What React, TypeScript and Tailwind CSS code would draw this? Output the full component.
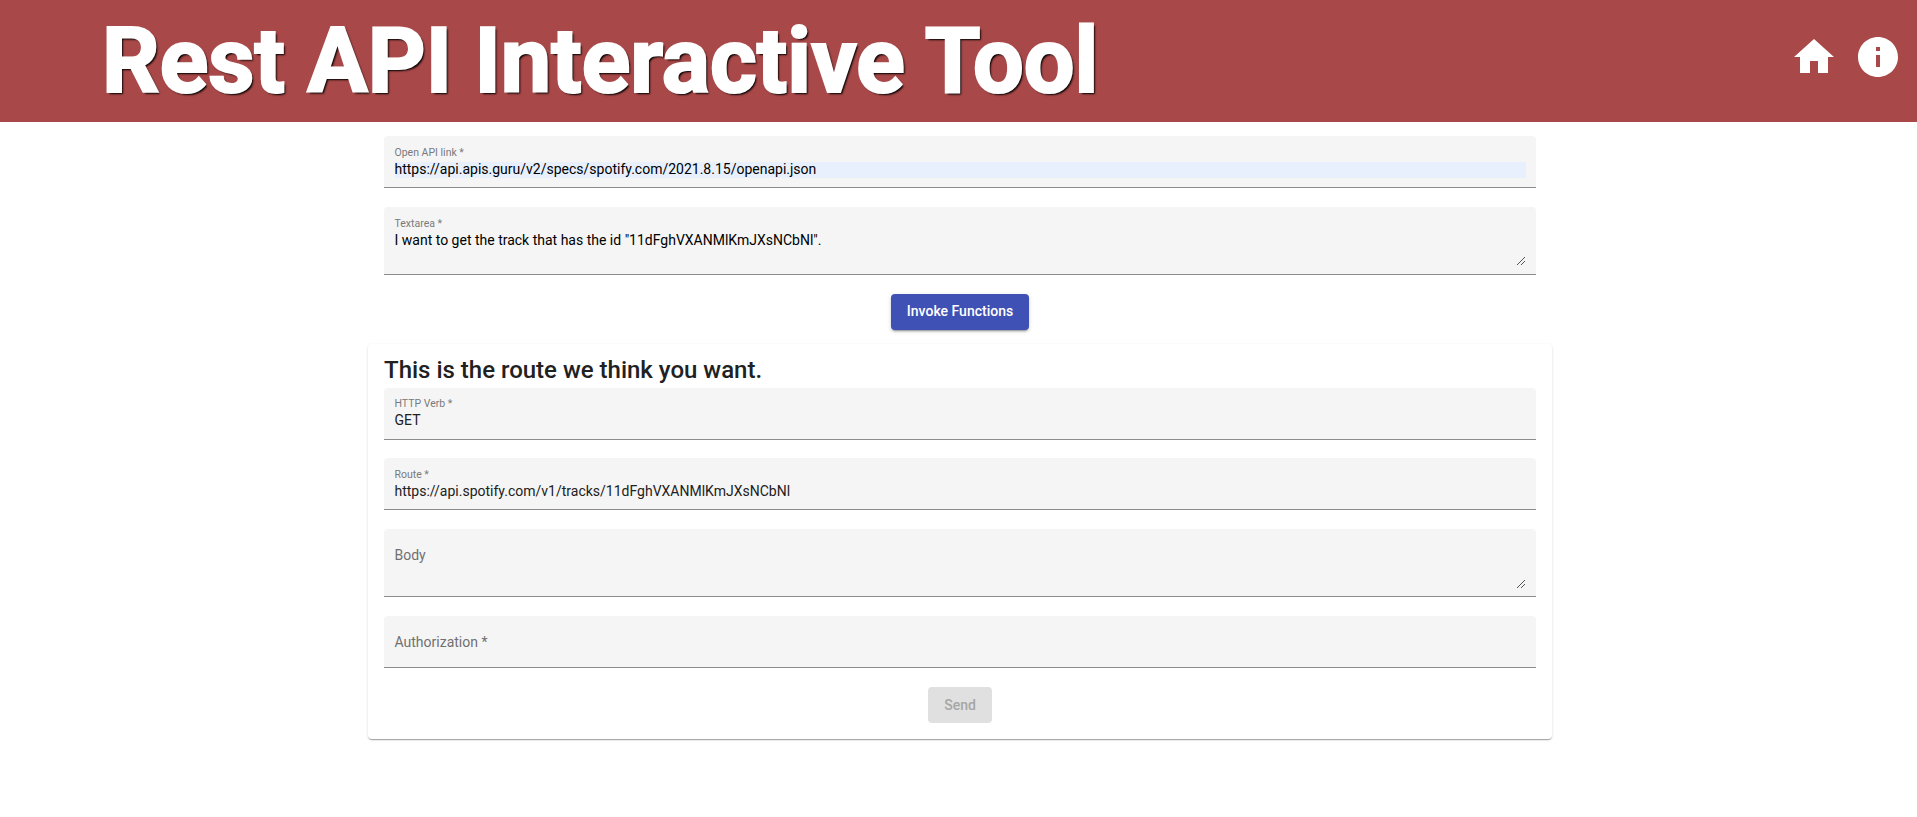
import { MdHome, MdInfo } from "react-icons/md";

type FieldProps = {
  label: string;
  value?: string;
  className: string;
  labelClass?: string;
  valueClass?: string;
  handleClass?: string;
};

function ResizeHandle({ className }: { className: string }) {
  const cells = [
    [0, 7], [1, 6], [2, 5], [3, 4], [4, 3], [5, 2], [6, 1], [7, 0],
    [4, 7], [5, 6], [6, 5], [7, 4],
  ];
  return (
    <svg className={`absolute right-[11px] h-2 w-2 ${className}`} viewBox="0 0 8 8" shapeRendering="crispEdges">
      {cells.map(([x, y]) => (
        <rect key={`${x}-${y}`} x={x} y={y} width="1" height="1" fill="#555" />
      ))}
    </svg>
  );
}

function Field({ label, value, className, labelClass = "h-[26px] pt-[11px]", valueClass = "text-[#212121]", handleClass }: FieldProps) {
  return (
    <div className={`relative w-full rounded-t-[4px] border-b border-[#8c8c8c] bg-[#f5f5f5] pr-[10px] pl-[10.5px] ${className}`}>
      {value ? (
        <>
          <div className={`text-[10.5px] leading-[12px] text-[#7a7a7a] ${labelClass}`}>{label}</div>
          <div className={`h-4 text-[14px] leading-[14px] ${valueClass}`}>{value}</div>
        </>
      ) : (
        <div className="pt-[18px] text-[14px] leading-[16px] text-[#707070]">{label}</div>
      )}
      {handleClass && <ResizeHandle className={handleClass} />}
    </div>
  );
}

export default function App() {
  return (
    <div className="min-h-[817px] bg-white font-['Roboto',sans-serif]">
      <header className="flex h-[122px] items-start justify-between bg-[#a84848] pr-[15px] pl-[102px]">
        <h1 className="pt-[9px] text-[90px] leading-[105px] font-bold whitespace-nowrap text-white [-webkit-text-stroke:2.2px_white] [text-shadow:2px_2px_2px_#000]">
          Rest API Interactive Tool
        </h1>
        <nav className="flex gap-4 pt-[33px] text-white">
          <MdHome className="size-12" />
          <MdInfo className="size-12" />
        </nav>
      </header>

      <main className="ml-[368px] flex w-[1184px] flex-col items-center pt-[14px]">
        <div className="flex w-full flex-col items-center px-4">
          <Field
            label="Open API link *"
            value="https://api.apis.guru/v2/specs/spotify.com/2021.8.15/openapi.json"
            className="h-[52px]"
            valueClass="bg-[#e8f0fe] text-black"
          />
          <Field
            label="Textarea *"
            value={'I want to get the track that has the id "11dFghVXANMlKmJXsNCbNl".'}
            className="mt-[19px] h-[68px]"
            valueClass="text-black"
            handleClass="bottom-[9px]"
          />
          <button className="mt-[19px] h-9 w-[138px] rounded-[4px] bg-[#3f51b5] pb-px text-[14px] font-medium text-white shadow-[0_3px_1px_-2px_rgba(0,0,0,.2),0_2px_2px_0_rgba(0,0,0,.14),0_1px_5px_0_rgba(0,0,0,.12)]">
            Invoke Functions
          </button>
        </div>

        <section className="mt-[14px] flex h-[395px] w-full flex-col items-center rounded-[4px] bg-white px-4 shadow-[0_2px_1px_-1px_rgba(0,0,0,.2),0_1px_1px_0_rgba(0,0,0,.14),0_1px_3px_0_rgba(0,0,0,.12)]">
          <h2 className="h-11 w-full pt-[10px] text-[24px] leading-[32px] font-medium text-[#212121]">
            This is the route we think you want.
          </h2>
          <Field label="HTTP Verb *" value="GET" className="h-[52px]" labelClass="h-[25px] pt-[10px]" />
          <Field
            label="Route *"
            value="https://api.spotify.com/v1/tracks/11dFghVXANMlKmJXsNCbNl"
            className="mt-[18px] h-[52px]"
          />
          <Field label="Body" className="mt-[19px] h-[68px]" handleClass="bottom-2" />
          <Field label="Authorization *" className="mt-[19px] h-[52px]" />
          <button className="mt-[19px] h-9 w-16 rounded-[4px] bg-[#e0e0e0] text-[14px] font-medium text-[#a6a6a6]" disabled>
            Send
          </button>
        </section>
      </main>
    </div>
  );
}
